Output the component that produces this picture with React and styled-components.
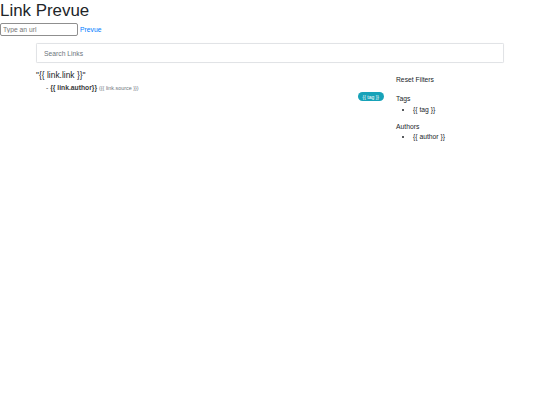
import React, { useState } from "react";
import styled, { createGlobalStyle } from "styled-components";

const GlobalStyle = createGlobalStyle`
  body {
    margin: 0;
    font-family: "Liberation Sans", Arial, sans-serif;
    font-size: 6.75px;
    line-height: 1.5;
    color: #212529;
    background: #fff;
  }
`;

const Title = styled.h1`
  margin: 0;
  font-size: 16.9px;
  font-weight: 400;
  line-height: 1.2;
  padding-top: 1px;
`;

const UrlForm = styled.form`
  display: flex;
  align-items: center;
  gap: 2px;
  margin-top: 2px;
`;

const UrlInput = styled.input`
  width: 78px;
  height: 13px;
  box-sizing: border-box;
  padding: 0 2px;
  border: 1px solid #8f8f8f;
  border-radius: 2px;
  font-family: inherit;
  font-size: 6.75px;
  color: #212529;

  &::placeholder {
    color: #757575;
  }
`;

const PrevueLink = styled.a`
  color: #007bff;
  text-decoration: none;
  font-size: 6.75px;
`;

const Container = styled.div`
  width: 468px;
  margin: 7px auto 0 36px;
`;

const SearchInput = styled.input`
  display: block;
  width: 100%;
  height: 20px;
  box-sizing: border-box;
  padding: 0 7px;
  border: 1px solid #e1e3e6;
  border-radius: 1.3px;
  box-shadow: 0 0 1px rgba(0, 0, 0, 0.06);
  font-family: inherit;
  font-size: 6.75px;
  color: #495057;

  &::placeholder {
    color: #6c757d;
  }
`;

const Row = styled.div`
  display: grid;
  grid-template-columns: 348px 1fr;
  column-gap: 12px;
  margin-top: 7px;
`;

const LinkList = styled.div`
  display: flex;
  flex-direction: column;
`;

const LinkCard = styled.article`
  display: flex;
  flex-direction: column;
`;

const LinkTitle = styled.h5`
  margin: 0 0 3px;
  font-size: 8.44px;
  font-weight: 400;
  line-height: 1.2;
  color: #212529;
`;

const AuthorLine = styled.div`
  padding-left: 10px;
  color: #3a3a3a;
`;

const Author = styled.strong`
  font-weight: 700;
`;

const Source = styled.small`
  font-size: 5.4px;
  color: #6c757d;
  margin-left: 2px;
`;

const Tags = styled.div`
  display: flex;
  justify-content: flex-end;
  margin-top: -1.5px;
`;

const Badge = styled.span`
  display: inline-block;
  padding: 1.5px 5px;
  border-radius: 5px;
  background: #17a2b8;
  color: #fff;
  font-size: 5px;
  line-height: 1.2;
  font-weight: 400;
  white-space: nowrap;
`;

const Sidebar = styled.aside`
  display: flex;
  flex-direction: column;
  padding-top: 5px;
  color: #212529;
`;

const ResetButton = styled.button`
  align-self: flex-start;
  background: none;
  border: 0;
  padding: 0;
  margin: 0 0 9px;
  font-family: inherit;
  font-size: 6.75px;
  line-height: 1.5;
  color: #212529;
  cursor: pointer;
`;

const FilterGroup = styled.div`
  margin-bottom: 7px;
`;

const FilterHeading = styled.div`
  font-size: 6.75px;
`;

const FilterList = styled.ul`
  margin: 0;
  padding-left: 17px;

  li {
    line-height: 1.5;
  }
`;

const links = [
  {
    id: 1,
    link: "{{ link.link }}",
    author: "{{ link.author}}",
    source: "({{ link.source }})",
    tags: ["{{ tag }}"],
  },
];

export default function App() {
  const [url, setUrl] = useState("");
  const [query, setQuery] = useState("");

  return (
    <>
      <GlobalStyle />
      <Title>Link Prevue</Title>
      <UrlForm onSubmit={(e) => e.preventDefault()}>
        <UrlInput
          placeholder="Type an url"
          value={url}
          onChange={(e) => setUrl(e.target.value)}
        />
        <PrevueLink href="#">Prevue</PrevueLink>
      </UrlForm>
      <Container>
        <SearchInput
          placeholder="Search Links"
          value={query}
          onChange={(e) => setQuery(e.target.value)}
        />
        <Row>
          <LinkList>
            {links.map((item) => (
              <LinkCard key={item.id}>
                <LinkTitle>"{item.link}"</LinkTitle>
                <AuthorLine>
                  - <Author>{item.author}</Author>
                  <Source>{item.source}</Source>
                </AuthorLine>
                <Tags>
                  {item.tags.map((t) => (
                    <Badge key={t}>{t}</Badge>
                  ))}
                </Tags>
              </LinkCard>
            ))}
          </LinkList>
          <Sidebar>
            <ResetButton>Reset Filters</ResetButton>
            <FilterGroup>
              <FilterHeading>Tags</FilterHeading>
              <FilterList>
                <li>{"{{ tag }}"}</li>
              </FilterList>
            </FilterGroup>
            <FilterGroup>
              <FilterHeading>Authors</FilterHeading>
              <FilterList>
                <li>{"{{ author }}"}</li>
              </FilterList>
            </FilterGroup>
          </Sidebar>
        </Row>
      </Container>
    </>
  );
}
